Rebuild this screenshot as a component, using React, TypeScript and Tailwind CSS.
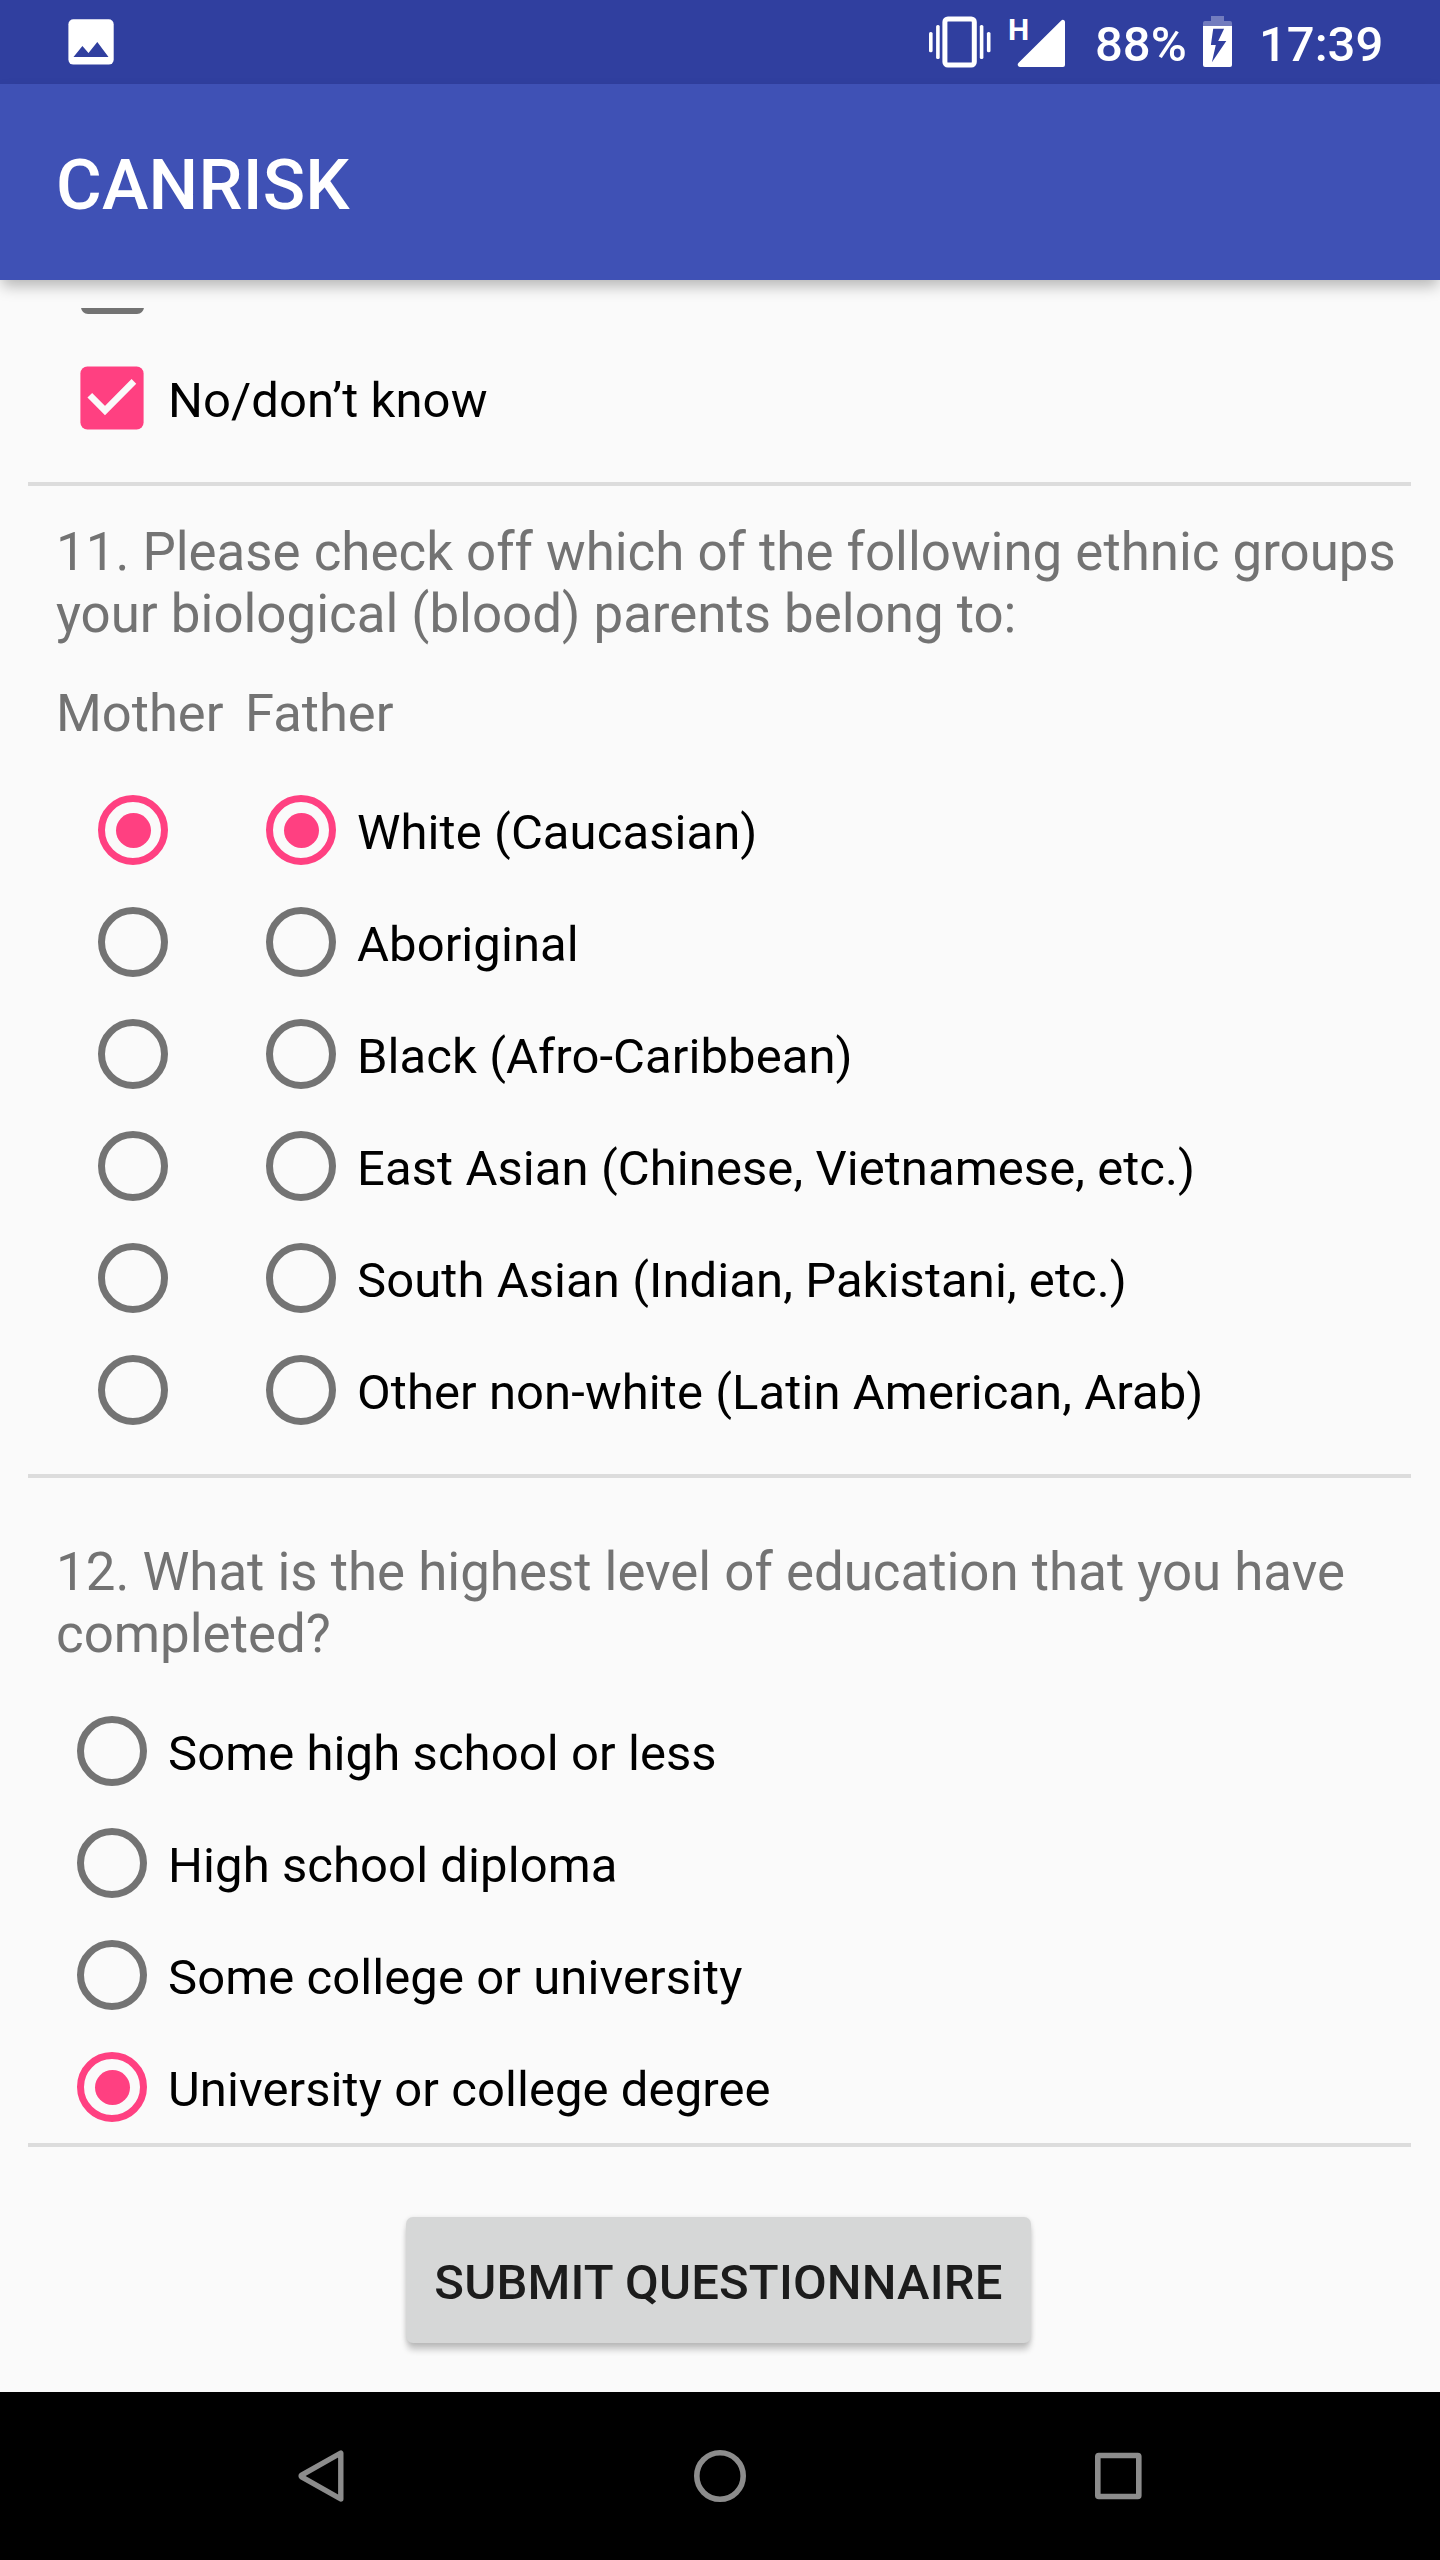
import React from "react";

const GROUPS = [
  "White (Caucasian)",
  "Aboriginal",
  "Black (Afro-Caribbean)",
  "East Asian (Chinese, Vietnamese, etc.)",
  "South Asian (Indian, Pakistani, etc.)",
  "Other non-white (Latin American, Arab)",
];

const EDUCATION = [
  "Some high school or less",
  "High school diploma",
  "Some college or university",
  "University or college degree",
];

function Radio({ checked = false }: { checked?: boolean }) {
  return (
    <span className="flex size-[112px] shrink-0 items-center justify-center">
      <span
        className={
          checked
            ? "flex size-[70px] items-center justify-center rounded-full border-[7px] border-[#ff4081]"
            : "size-[70px] rounded-full border-[7px] border-[#737373]"
        }
      >
        {checked && <span className="size-[35px] rounded-full bg-[#ff4081]" />}
      </span>
    </span>
  );
}

function Label({ children }: { children: React.ReactNode }) {
  return (
    <span className="whitespace-nowrap pt-[5px] text-[49px] leading-[57px] tracking-[0.08px] text-black">
      {children}
    </span>
  );
}

function Question({ children }: { children: React.ReactNode }) {
  return <p className="whitespace-nowrap pl-14 text-[52.84px] leading-[62px] text-[#737373]">{children}</p>;
}

function Divider() {
  return <div className="ml-7 mr-[29px] h-1 shrink-0 bg-[#dcdcdc]" />;
}

function StatusBar() {
  return (
    <div className="flex h-[84px] items-start bg-[#303f9f] text-[49px] font-medium leading-[57px] text-white">
      <svg className="ml-[68px] mt-[19px] h-[46px] w-[46px]" viewBox="0 0 46 46">
        <rect x="0.4" y="0.3" width="45.3" height="45.3" rx="5" fill="#fff" />
        <path d="M5.5 38 14.4 27 20.5 34 29.3 23 40.5 38Z" fill="#303f9f" />
      </svg>
      <svg className="ml-[814px] mt-4 h-[52px] w-[64px]" viewBox="928 16 64 52" fill="#fff">
        <rect x="929" y="32" width="3.6" height="20.3" rx="1.6" />
        <rect x="936.1" y="25" width="3.6" height="34" rx="1.6" />
        <rect x="944.9" y="19" width="29.4" height="46" rx="3" fill="none" stroke="#fff" strokeWidth="5" />
        <rect x="979.8" y="25" width="3.6" height="34" rx="1.6" />
        <rect x="986.9" y="32" width="3.6" height="20.3" rx="1.6" />
      </svg>
      <span className="ml-[16px] mt-[12px] w-[20px] text-[30px] font-bold leading-[35px]">H</span>
      <svg className="-ml-[11px] mt-[19px] h-[49px] w-[49px]" viewBox="1017 19 49 49" fill="#fff">
        <path d="M1061.3 20.6a2.1 2.1 0 0 1 3.7 1.4V65q0 2-2 2H1020a2.4 2.4 0 0 1-1.4-4.3Z" />
      </svg>
      <span className="ml-[29px] mt-4 w-[93px]">88%</span>
      <svg className="ml-[15px] mt-4 h-[52px] w-[30px]" viewBox="1203 16 30 52">
        <path d="M1211 16h13v5h6q2 0 2 2v3h-29v-3q0-2 2-2h6Z" fill="#fff" fillOpacity=".32" />
        <path d="M1203 26h29v39q0 2-2 2h-25q-2 0-2-2Z" fill="#fff" />
        <path d="M1213.2 28.7h10.9l-5.9 12.3h8.1l-14.4 21.3 3.9-17.3h-4.9Z" fill="#303f9f" />
      </svg>
      <span className="ml-[26px] mt-4">17:39</span>
    </div>
  );
}

export default function App() {
  return (
    <div className="flex h-[2560px] w-[1440px] flex-col overflow-hidden bg-[#fafafa] font-['Roboto',sans-serif]">
      <StatusBar />
      <header className="flex h-[196px] shrink-0 items-center bg-[#3f51b5] pl-14 pt-1.5 text-[70px] font-medium leading-[82px] tracking-[0.2px] text-white shadow-[0_8px_14px_-2px_rgba(0,0,0,0.28)]">
        CANRISK
      </header>

      <main className="mt-7 flex h-[2084px] shrink-0 flex-col overflow-hidden">
        <div className="ml-[80.5px] h-[6px] w-[63px] shrink-0 overflow-hidden">
          <div className="-mt-[57.5px] size-[63px] rounded-[7px] border-[7px] border-[#737373]" />
        </div>
        <div className="mt-[28px] flex h-[112px] shrink-0 items-center">
          <svg className="ml-[80px] mr-6 size-16" viewBox="0 0 64 64">
            <rect x="0.4" y="0.4" width="63.2" height="63.2" rx="7" fill="#ff4081" />
            <path d="M9.8 29.2 25 44.6 53.9 15.4" fill="none" stroke="#fafafa" strokeWidth="6.6" />
          </svg>
          <Label>No/don’t know</Label>
        </div>
        <div className="mt-7">
          <Divider />
        </div>

        <section className="mt-[35px]">
          <Question>
            11. Please check off which of the following ethnic groups
            <br />
            your biological (blood) parents belong to:
          </Question>
          <div className="mt-[37px] flex pl-14 text-[52.5px] leading-[62px] text-[#737373]">
            <span className="w-[189px]">Mother</span>
            <span>Father</span>
          </div>
          <div className="mt-[30px]">
            {GROUPS.map((group, i) => (
              <div key={group} className="flex h-[112px] items-center pl-[77px]">
                <Radio checked={i === 0} />
                <span className="w-14" />
                <Radio checked={i === 0} />
                <Label>{group}</Label>
              </div>
            ))}
          </div>
        </section>
        <div className="mt-7">
          <Divider />
        </div>

        <section className="mt-[63px]">
          <Question>
            12. What is the highest level of education that you have
            <br />
            completed?
          </Question>
          <div className="mt-[30px]">
            {EDUCATION.map((level, i) => (
              <div key={level} className="flex h-[112px] items-center pl-14">
                <Radio checked={i === 3} />
                <Label>{level}</Label>
              </div>
            ))}
          </div>
        </section>
        <Divider />

        <button className="ml-[406px] mt-[70px] flex h-[126px] w-[625px] shrink-0 items-center justify-center rounded-[7px] bg-[#d6d7d7] pt-[5px] text-[49px] font-medium leading-[57px] tracking-[0.16px] text-[#1c1c1c] shadow-[0_8px_6px_-1px_rgba(0,0,0,0.2),0_1px_5px_rgba(0,0,0,0.12)]">
          SUBMIT QUESTIONNAIRE
        </button>
      </main>

      <nav className="flex h-[168px] shrink-0 items-center bg-black">
        <svg className="ml-[292px] size-14" viewBox="292 2448 56 56" fill="none" stroke="#8c8c8c" strokeWidth="5.4" strokeLinejoin="round">
          <path d="M340.8 2453v46L301.6 2476.8q-1-.8 0-1.6Z" />
        </svg>
        <svg className="ml-[344px] size-14" viewBox="0 0 56 56" fill="none" stroke="#8c8c8c" strokeWidth="5.6">
          <circle cx="28" cy="28" r="23.2" />
        </svg>
        <svg className="ml-[342px] size-14" viewBox="1090 2448 56 56" fill="none" stroke="#8c8c8c" strokeWidth="5.6">
          <rect x="1097.8" y="2455.5" width="41" height="41" rx="1" />
        </svg>
      </nav>
    </div>
  );
}
